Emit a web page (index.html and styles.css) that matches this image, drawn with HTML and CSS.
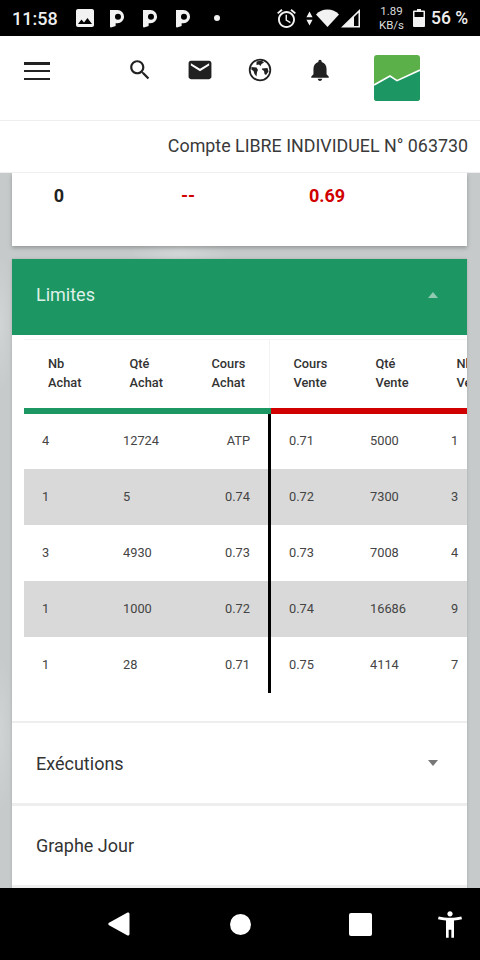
FILE: index.html
```html
<!DOCTYPE html>
<html lang="fr">
<head>
<meta charset="utf-8">
<title>Limites</title>
<link rel="stylesheet" href="styles.css">
</head>
<body>
<div class="screen">
  <div class="status">
    <span class="clock">11:58</span>
    <svg class="st-photo" viewBox="3 3 18 18"><path d="M21 19V5c0-1.100-.9-2-2-2H5c-1.100 0-2 .9-2 2v14c0 1.100.9 2 2 2h14c1.100 0 2-.9 2-2zM8.500 13.500l2.500 3.010L14.500 12l4.500 6H5l3.500-4.500z"/></svg>
    <svg class="st-p" viewBox="0 0 16 20"><path fill-rule="evenodd" d="M0 1h8a7 7 0 0 1 0 14H6v3l-5 1.500C.3 19.700 0 19 0 18zM8.500 4.800a3.200 3.200 0 1 0 0 6.400 3.200 3.200 0 0 0 0-6.400z"/></svg>
    <svg class="st-p" viewBox="0 0 16 20"><path fill-rule="evenodd" d="M0 1h8a7 7 0 0 1 0 14H6v3l-5 1.500C.3 19.700 0 19 0 18zM8.500 4.800a3.200 3.200 0 1 0 0 6.400 3.200 3.200 0 0 0 0-6.400z"/></svg>
    <svg class="st-p" viewBox="0 0 16 20"><path fill-rule="evenodd" d="M0 1h8a7 7 0 0 1 0 14H6v3l-5 1.500C.3 19.700 0 19 0 18zM8.500 4.800a3.200 3.200 0 1 0 0 6.400 3.200 3.200 0 0 0 0-6.400z"/></svg>
    <span class="st-dot"></span>
    <svg class="st-alarm" viewBox="2 1.860 20 20.140"><path d="M22 5.720l-4.600-3.860-1.290 1.530 4.600 3.860L22 5.720zM7.880 3.390L6.600 1.860 2 5.710l1.290 1.530 4.590-3.850zM12.500 8H11v6l4.750 2.850.75-1.230-4-2.370V8zM12 4c-4.970 0-9 4.030-9 9s4.030 9 9 9 9-4.030 9-9-4.030-9-9-9zm0 16c-3.870 0-7-3.130-7-7s3.130-7 7-7 7 3.130 7 7-3.130 7-7 7z"/></svg>
    <svg class="st-arrows" viewBox="0 0 8 16"><path d="M4 0l3.500 6.500h-7zM4 16L.5 9.500h7z"/></svg>
    <svg class="st-wifi" viewBox="0 0 23 18"><path d="M11.500 18L0 5.500C3 2.200 7 .5 11.500.5S20 2.200 23 5.500z"/></svg>
    <svg class="st-signal" viewBox="0 0 19 19"><path fill-rule="evenodd" d="M0 18.500L19 0v18.500zM13 8v9h4.500V3.800z"/></svg>
    <span class="st-speed"><span>1.89</span><span>KB/s</span></span>
    <svg class="st-batt" viewBox="0 0 12 18"><path fill-rule="evenodd" d="M4 0h4v1.500h3a1 1 0 0 1 1 1V17a1 1 0 0 1-1 1H1a1 1 0 0 1-1-1V2.500a1 1 0 0 1 1-1h3zM1.500 3v5h9V3z"/></svg>
    <span class="st-pct">56 %</span>
  </div>

  <header class="nav">
    <button class="burger" aria-label="Menu"><span></span><span></span><span></span></button>
    <div class="nav-icons">
      <svg class="nav-ic" viewBox="1 1 22 22"><path d="M15.500 14h-.79l-.28-.27C15.410 12.590 16 11.110 16 9.500 16 5.910 13.090 3 9.500 3S3 5.910 3 9.500 5.910 16 9.500 16c1.610 0 3.090-.59 4.230-1.570l.27.28v.79l5 4.990L20.490 19l-4.990-5zm-6 0C7.010 14 5 11.990 5 9.500S7.010 5 9.500 5 14 7.010 14 9.500 11.990 14 9.500 14z"/></svg>
      <svg class="nav-ic" viewBox="1.500 1.500 21 21"><path d="M20 4H4c-1.100 0-1.990.9-1.990 2L2 18c0 1.100.9 2 2 2h16c1.100 0 2-.9 2-2V6c0-1.100-.9-2-2-2zm0 4l-8 5-8-5V6l8 5 8-5v2z"/></svg>
      <svg class="nav-ic" viewBox="0 0 24 24"><circle class="globe-ring" cx="12" cy="12" r="10.300"/><path d="M3.500 9l5 .5 1.500 2.500-1 2-.5 4.500-2-2.500-1-3-2.200-1.500zM14 10.500l5.500-.5 1 3.500-2.500 3.500-1.500-1-.5-3-2-1.500zM8.500 3.500l5-1 2.500 2-2.500 1.500-1 2-1.500-1.500-2.500.5z"/></svg>
      <svg class="nav-ic" viewBox="1 1 22 22"><path d="M12 22c1.100 0 2-.9 2-2h-4c0 1.100.89 2 2 2zm6-6v-5c0-3.070-1.640-5.640-4.500-6.320V4c0-.83-.67-1.500-1.500-1.500s-1.500.67-1.500 1.500v.68C7.630 5.360 6 7.920 6 11v5l-2 2v1h16v-1l-2-2z"/></svg>
    </div>
    <svg class="logo" viewBox="0 0 46 46">
      <rect class="logo-top" width="46" height="46" rx="3"/>
      <path class="logo-bottom" d="M0 30l16-9 7 4.700L46 15v28a3 3 0 0 1-3 3H3a3 3 0 0 1-3-3z"/>
      <path class="logo-line" d="M0 30l16-9 7 4.700L46 15"/>
    </svg>
  </header>

  <div class="account">Compte LIBRE INDIVIDUEL N° 063730</div>

  <main class="content">
    <section class="card summary">
      <span class="sum-val">0</span>
      <span class="sum-val neg">--</span>
      <span class="sum-val neg">0.69</span>
    </section>

    <section class="card panel">
      <div class="panel-head">
        <span>Limites</span>
        <span class="caret up"></span>
      </div>
      <div class="book">
        <div class="book-head">
          <div class="hcell">Nb<br>Achat</div>
          <div class="hcell">Qté<br>Achat</div>
          <div class="hcell hcell-last">Cours<br>Achat</div>
          <div class="hcell hcell-sell">Cours<br>Vente</div>
          <div class="hcell">Qté<br>Vente</div>
          <div class="hcell">Nb<br>Vente</div>
        </div>
        <div class="book-bars"><span class="bar-buy"></span><span class="bar-sell"></span></div>
        <div class="row"><div class="side buy"><span>4</span><span>12724</span><span class="price">ATP</span></div><div class="side sell"><span>0.71</span><span>5000</span><span>1</span></div></div>
        <div class="row alt"><div class="side buy"><span>1</span><span>5</span><span class="price">0.74</span></div><div class="side sell"><span>0.72</span><span>7300</span><span>3</span></div></div>
        <div class="row"><div class="side buy"><span>3</span><span>4930</span><span class="price">0.73</span></div><div class="side sell"><span>0.73</span><span>7008</span><span>4</span></div></div>
        <div class="row alt"><div class="side buy"><span>1</span><span>1000</span><span class="price">0.72</span></div><div class="side sell"><span>0.74</span><span>16686</span><span>9</span></div></div>
        <div class="row"><div class="side buy"><span>1</span><span>28</span><span class="price">0.71</span></div><div class="side sell"><span>0.75</span><span>4114</span><span>7</span></div></div>
      </div>
      <div class="acc"><span>Exécutions</span><span class="caret down"></span></div>
      <div class="acc acc-wide"><span>Graphe Jour</span></div>
      <div class="acc acc-rest"></div>
    </section>
  </main>

  <nav class="sysnav">
    <svg class="sys-back" viewBox="0 0 22 24"><path d="M20 .5c1 0 1.500.6 1.500 1.500v20c0 .9-.5 1.500-1.500 1.500-.3 0-.6-.1-.9-.3L1 13.200c-1-.6-1-1.800 0-2.400L19.100.8c.3-.2.6-.3.9-.3z"/></svg>
    <span class="sys-home"></span>
    <span class="sys-recent"></span>
    <svg class="sys-a11y" viewBox="3 2 18 20"><path d="M20.500 6c-2.610.7-5.670 1-8.500 1s-5.890-.3-8.500-1L3 8c1.860.5 4 .83 6 1v13h2v-6h2v6h2V9c2-.17 4.140-.5 6-1l-.5-2zM12 6c1.100 0 2-.9 2-2s-.9-2-2-2-2 .9-2 2 .9 2 2 2z"/></svg>
  </nav>
</div>
</body>
</html>
```
FILE: styles.css
```css
* { box-sizing: border-box; }
html, body { margin: 0; padding: 0; }
body { font-family: Roboto, "Liberation Sans", sans-serif; background: #fff; color: #333; }
.screen { width: 480px; height: 960px; display: flex; flex-direction: column; overflow: hidden; }

/* Status bar */
.status { height: 36px; flex: none; background: #000; color: #eee; display: flex; align-items: center; padding-left: 12px; }
.status svg { fill: #f2f2f2; display: block; flex: none; }
.clock { font-size: 18px; font-weight: 500; width: 64px; }
.st-photo { width: 18px; height: 18px; margin-right: 16px; }
.st-p { width: 15px; height: 19px; margin-right: 18px; }
.st-dot { width: 6px; height: 6px; border-radius: 50%; background: #f2f2f2; margin-left: 5px; flex: none; }
.st-alarm { width: 19px; height: 19px; margin-left: 57px; }
.st-arrows { width: 7px; height: 15px; margin-left: 10px; }
.st-wifi { width: 23px; height: 18px; margin-left: 3px; }
.st-signal { width: 19px; height: 19px; margin-left: 2px; }
.st-speed { display: flex; flex-direction: column; align-items: center; font-size: 11.500px; line-height: 14px; width: 27px; margin-left: 18px; color: #ddd; }
.st-batt { width: 12px; height: 18px; margin-left: 8px; }
.st-pct { font-size: 17.500px; font-weight: 500; margin-left: 6px; white-space: nowrap; }

/* Top nav */
.nav { height: 85px; flex: none; background: #fff; display: flex; align-items: flex-start; padding: 19px 0 0 24px; border-bottom: 1px solid #eee; }
.burger { width: 26px; height: 18px; margin-top: 7px; padding: 0; border: 0; background: none; display: flex; flex-direction: column; justify-content: space-between; }
.burger span { display: block; height: 2.500px; background: #222; }
.nav-icons { display: flex; gap: 36px; margin: 3px 0 0 78px; }
.nav-ic { width: 24px; height: 24px; fill: #212121; display: block; }
.globe-ring { fill: none; stroke: #212121; stroke-width: 1.800; }
.logo { width: 46px; height: 46px; margin-left: 42px; display: block; }
.logo-top { fill: #5bb04a; }
.logo-bottom { fill: #1c9663; }
.logo-line { fill: none; stroke: #fff; stroke-width: 1.600; }

/* Account line */
.account { height: 52px; flex: none; background: #fff; border-bottom: 1px solid #eee; font-size: 17.850px; color: #3a3a3a; display: flex; align-items: center; justify-content: flex-end; padding: 0 12px 2px 0; }

/* Content */
.content { flex: 1; min-height: 0; overflow: hidden; padding: 0 13px 0 12px;
  background:
    radial-gradient(ellipse 50px 20px at 180px 80px, rgba(255,255,255,.22), rgba(255,255,255,0)),
    radial-gradient(ellipse 14px 70px at 0 150px, rgba(255,255,255,.2), rgba(255,255,255,0)),
    radial-gradient(ellipse 14px 80px at 0 560px, rgba(255,255,255,.18), rgba(255,255,255,0)),
    #c6caca; }
.card { background: #fff; }
.summary { height: 73px; display: grid; grid-template-columns: 94px 164px 114px; padding-top: 12px; align-items: start; box-shadow: 0 2px 4px rgba(0,0,0,.25); margin-bottom: 13px; }
.sum-val { font-size: 18px; font-weight: 700; text-align: center; line-height: 22px; color: #222; }
.sum-val.neg { color: #d00000; }

.panel { box-shadow: 0 0 3px rgba(0,0,0,.15); }
.panel-head { height: 76px; background: #1c9663; color: #dff0e8; font-size: 18px; display: flex; align-items: center; justify-content: space-between; padding: 0 29px 4px 24px; }
.panel-head > span:first-child { margin-top: -2px; }
.caret { width: 0; height: 0; border-left: 5.500px solid transparent; border-right: 5.500px solid transparent; display: block; margin-right: .5px; }
.caret.up { border-bottom: 6px solid #8fcab1; }
.caret.down { border-top: 6px solid #777; }

/* Order book */
.book { padding-left: 12px; overflow: hidden; height: 386px; }
.book-head { height: 69px; margin-top: 4px; border-top: 1px solid #f5f5f5; display: grid; grid-template-columns: 81.500px 82px 81px 83px 81px 81px; width: 490px; font-size: 12.800px; font-weight: 500; line-height: 19px; color: #333; padding-top: 14px; }
.hcell { padding-left: 24px; white-space: nowrap; }
.hcell-last { box-shadow: 1px 0 0 #f3f3f3; margin-top: -14px; padding-top: 14px; }
.hcell-sell { padding-left: 25px; }
.book-bars { display: flex; height: 6px; margin-bottom: -1px; position: relative; z-index: 1; }
.bar-buy { width: 247px; background: #1c9663; flex: none; }
.bar-sell { flex: 1; background: #d00000; }
.row { display: flex; height: 56px; align-items: center; font-size: 12.800px; color: #444; width: 490px; }
.row.alt { background: #d9d9d9; }
.side { display: grid; height: 100%; align-items: center; padding-bottom: 1px; }
.buy { width: 247px; grid-template-columns: 81px 82px 1fr; border-right: 3px solid #000; padding: 0 18px 1px; }
.sell { grid-template-columns: 81px 81px 40px; padding-left: 18px; }
.price { text-align: right; }

.acc { height: 82px; border-top: 2px solid #eee; font-size: 18px; color: #333; display: flex; align-items: center; justify-content: space-between; padding: 0 29px 0 24px; }
.acc-wide { border-top-width: 3px; }
.acc-rest { border-top-width: 3px; }

/* System nav */
.sysnav { height: 72px; flex: none; background: #000; display: flex; align-items: center; padding-left: 108px; }
.sysnav svg { fill: #fff; display: block; flex: none; }
.sys-back { width: 22px; height: 24px; }
.sys-home { width: 21px; height: 21px; border-radius: 50%; background: #fff; margin-left: 100px; flex: none; }
.sys-recent { width: 23px; height: 23px; border-radius: 2px; background: #fff; margin-left: 98px; flex: none; }
.sys-a11y { width: 24px; height: 27px; margin-left: 66px; }
```
